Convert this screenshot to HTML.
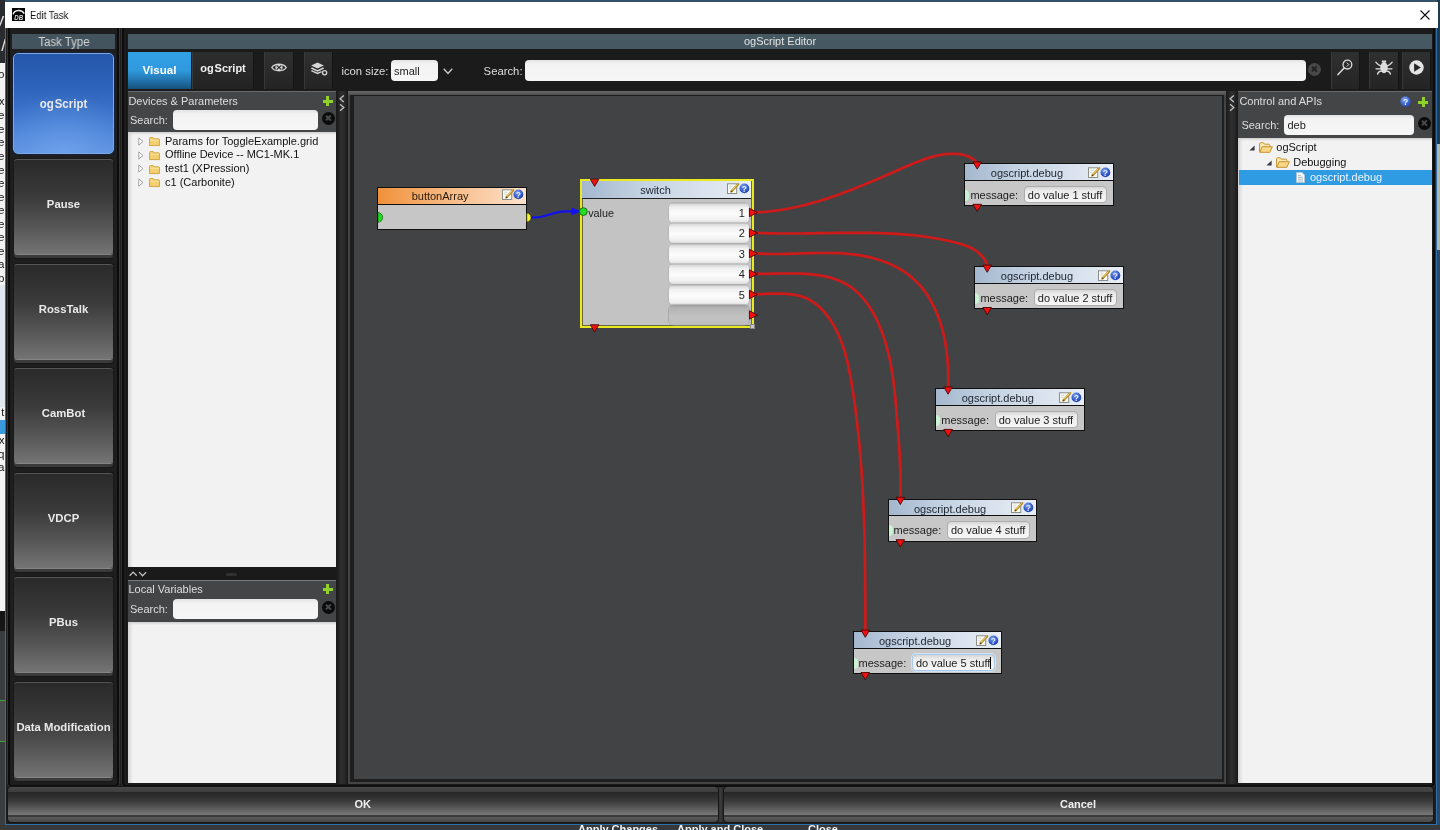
<!DOCTYPE html>
<html><head><meta charset="utf-8"><title>Edit Task</title>
<style>
*{box-sizing:border-box;margin:0;padding:0}
html,body{width:1440px;height:830px;overflow:hidden}
body{position:relative;background:#3a3b3c;font-family:"Liberation Sans",sans-serif;font-size:11px;color:#e4e4e4}
.a{position:absolute}
/* desktop behind */
#bgtop{left:0;top:0;width:1440px;height:3px;background:#34536b}
#bgleft{left:0;top:0;width:5px;height:830px;overflow:hidden;background:#f3f3f3}
#bgleft i{position:absolute;left:0;width:5px}
#bgleft b{position:absolute;right:.6px;font-weight:normal;font-size:11px;line-height:13px;color:#111;white-space:nowrap}
#bgright{left:1437px;top:0;width:3px;height:830px;background:linear-gradient(#1f3b50 0,#1f3b50 144px,#aeb9ac 144px,#aeb9ac 250px,#2a4a68 250px)}
#bgbot{left:0;top:825px;width:1440px;height:5px;background:#38393b;overflow:hidden}
#bgbot span{position:absolute;top:-2.5px;font-weight:bold;font-size:11px;color:#f2f2f2;white-space:nowrap}
/* window */
#win{left:4.6px;top:2px;width:1432.6px;height:823px;background:#1d1d1d;border:1px solid #2f6ea8;border-top:none}
#title{left:5px;top:2px;width:1432.5px;height:26px;background:#fff;z-index:5}
#title .t{left:25px;top:6.600px;will-change:transform;font-size:11px;color:#111;transform:scaleX(.86);transform-origin:0 0;white-space:nowrap}
/* left task panel */
#lp{left:7px;top:22px;width:113px;height:766px;border:1px solid #343434;border-radius:5px;background:#1e1e1e;box-shadow:inset 0 0 0 2px #0c0c0c}
#lph{left:12px;top:34px;width:103px;height:15px;background:#44545e;color:#d4d4d4;text-align:center;font-size:12px;line-height:15px}
#lph span{display:inline-block;transform:scaleX(.95);position:relative;top:1px;will-change:transform}
.tb{left:14px;width:99px;height:95px;border-radius:3px;background:linear-gradient(#2a2a2a 0%,#2f2f2f 12%,#3b3b3b 40%,#5a5a5a 75%,#747474 100%);border-top:1px solid #555;box-shadow:0 1px 0 #848484,0 4px 0 #3a3a3a,0 5px 0 #171717, 0 0 0 1px #191919;color:#e9e9e9;font-weight:bold;font-size:11.3px;text-align:center}
.tb span{position:absolute;left:0;right:0;text-align:center}
#tb0{top:53px;left:13px;width:101px;height:101px;border-radius:5px;background:radial-gradient(ellipse 75% 60% at 50% 100%,rgba(125,175,245,.55),rgba(125,175,245,0) 100%),linear-gradient(#2557ab 0%,#2c62b9 30%,#3f77cd 65%,#5a8fe0 100%);border:1px solid #7aa7e6;box-shadow:0 0 0 1px #16233a}
/* editor */
#eh{left:128px;top:34px;width:1304px;height:15px;background:#465963;color:#e2e2e2;text-align:center;line-height:15px;font-size:11px}
#tool{left:127px;top:50px;width:1306px;height:40px;background:#1b1b1b}
.tbtn{top:52px;height:37px;background:linear-gradient(#303030,#242424);border-left:1px solid #383838;border-right:1px solid #151515}
#tabv{left:128px;top:52px;width:63px;height:37px;background:linear-gradient(#33a0e6 0%,#2f99de 50%,#2272aa 78%,#17517c 100%);color:#fff;font-weight:bold;font-size:11.6px;text-align:center;line-height:36px}
#tabo{left:192px;top:52px;width:62px;height:37px;background:linear-gradient(#2d2d2d,#232323);border-left:1px solid #3a3a3a;border-right:1px solid #141414;color:#f0f0f0;font-weight:bold;font-size:11.6px;text-align:center;line-height:31px}
.inp{background:linear-gradient(#e2e2e2 0,#f3f3f3 4px,#f6f6f6 100%);border-radius:4px;color:#222}
.lbl{color:#dedede;white-space:nowrap}
/* panels */
.ph{background:#444546;color:#e2e2e2}
.list{background:linear-gradient(90deg,#d4d4d4 0,#f2f2f2 5px);color:#111}
.list::before{content:"";position:absolute;left:0;right:0;top:0;height:3px;background:linear-gradient(#cfcfcf,rgba(242,242,242,0))}
.row{position:absolute;white-space:nowrap;color:#111;font-size:11px;line-height:13px}
.xb{width:13px;height:13px;border-radius:50%;background:#0b0b0b}
.xb::before,.xb::after{content:"";position:absolute;left:3.2px;top:5.4px;width:6.6px;height:2.2px;background:var(--x,#4b4b4b);transform:rotate(45deg)}
.xb::after{transform:rotate(-45deg)}
.plus::before,.plus::after{content:"";position:absolute;background:#8fd02a}
.plus{width:10px;height:10px}
.plus::before{left:3.5px;top:0;width:3px;height:10px}
.plus::after{left:0;top:3.5px;width:10px;height:3px}
/* canvas */
#cvf{left:347.5px;top:91px;width:880.5px;height:693px;background:#1e1e1e}
#cvf2{left:348px;top:91px;width:878px;height:693px;border-top:4px solid #5a5a5a;border-left:2px solid #474747;border-right:2px solid #424242;border-bottom:2px solid #383838;border-image:linear-gradient(#686868 0,#4e4e4e 4px,#444 5px,#444 100%) 4 2 2 2}
#cv{left:354px;top:96px;width:868px;height:683px;background:#424345}
/* nodes */
.node{position:absolute;border:1px solid #101010;background:#c7c7c7;color:#1c1c1c}
.dbg{width:149.6px;height:43.2px}
.nh{height:16.6px;border-bottom:1px solid #101010;text-align:center;line-height:18px;font-size:11px;color:#1d2430;background:linear-gradient(90deg,#a3b7ce 0%,#c4d2e2 35%,#e9eef5 100%);white-space:nowrap}
.dbg .nh{padding-right:24.5px;padding-left:0}
.nb{position:relative}
.pg{position:absolute;left:0;top:9px;width:4px;height:11px;border-radius:0 6px 6px 0;background:#c9f3d2}
.ml{position:absolute;left:5px;top:8.4px;font-size:11px;line-height:13px}
.mi{position:absolute;left:58.4px;top:5.2px;width:83px;height:17.4px;border-radius:4px;background:linear-gradient(#d6d6d6 0,#ececec 4px,#f6f6f6 100%);border:1px solid #adadad;font-size:11px;line-height:16.4px;padding-left:3px;white-space:nowrap;color:#1c1c1c}
.mi.foc{border-color:#a9c9ea;box-shadow:0 0 0 1px #d3e3f3}
.cur{display:inline-block;width:1px;height:12px;background:#000;vertical-align:-2px;margin-left:0}
.ic{position:absolute}
svg{overflow:visible}
#root{position:absolute;left:0;top:0;width:1440px;height:830px;will-change:transform}
</style></head><body><div id="root">
<div class="a" id="bgtop"></div>
<div class="a" id="bgleft"><i style="top:0;height:63px;background:#2a2b2f"></i><i style="top:285px;height:122px;background:#dfe6ee"></i><i style="top:420px;height:14px;background:#3a98dc"></i><i style="top:611px;height:20px;background:#151515"></i><i style="top:631px;height:199px;background:#3b3c3d"></i><i style="top:700px;height:1px;background:#2fae3a"></i><i style="top:701px;height:40px;background:#4a4b4c"></i><i style="top:741px;height:1px;background:#2fae3a"></i><b style="top:11px;color:#e4e4e4;font-size:17px;line-height:17px;right:-4px">y:</b><b style="top:37px;color:#e4e4e4;font-size:17px;line-height:17px;right:-1px">/</b><b style="top:67.6px">o</b><b style="top:95.0px">x</b><b style="top:109.0px">e</b><b style="top:122.5px">e</b><b style="top:136.0px">e</b><b style="top:150.0px">e</b><b style="top:163.5px">e</b><b style="top:177.0px">e</b><b style="top:190.5px">e</b><b style="top:204.0px">e</b><b style="top:217.5px">e</b><b style="top:231.0px">e</b><b style="top:244.5px">e</b><b style="top:258.0px">a</b><b style="top:271.5px">p</b><b style="top:406.0px">t</b><b style="top:434.0px">x</b><b style="top:448.0px">q</b><b style="top:461.0px">a</b></div>
<div class="a" id="bgright"></div>
<div class="a" id="bgbot"><span style="left:578px">Apply Changes</span><span style="left:677px">Apply and Close</span><span style="left:808px">Close</span></div>

<div class="a" id="win"></div>
<div class="a" id="title">
 <svg class="a" style="left:7px;top:6px" width="13" height="13" viewBox="0 0 14 14"><rect width="14" height="14" fill="#050505"/><path d="M1.200 6.800C2.400 1.800 10.600 1 13.200 6" fill="none" stroke="#ececec" stroke-width="1.500"/><text x="7.200" y="12.400" font-family="Liberation Sans" font-weight="bold" font-style="italic" font-size="8.200" fill="#dcdcdc" text-anchor="middle" textLength="9.500" lengthAdjust="spacingAndGlyphs">DB</text></svg>
 <div class="a t">Edit Task</div>
 <svg class="a" style="left:1415px;top:8px" width="10" height="10" viewBox="0 0 10 10"><path d="M.5.5l9 9M9.5.5l-9 9" stroke="#111" stroke-width="1.1"/></svg>
</div>

<!-- left task type panel -->
<div class="a" id="lp"></div>
<div class="a" id="lph"><span>Task Type</span></div>
<div class="a tb" id="tb0"><span style="top:42.500px;transform:scaleX(.94);font-size:12.200px">og&#8202;Script</span></div>
<div class="a tb" style="top:159px"><span style="top:38px">Pause</span></div>
<div class="a tb" style="top:263.5px"><span style="top:38px">RossTalk</span></div>
<div class="a tb" style="top:368px"><span style="top:38px">CamBot</span></div>
<div class="a tb" style="top:472.5px"><span style="top:38px">VDCP</span></div>
<div class="a tb" style="top:577px"><span style="top:38px">PBus</span></div>
<div class="a tb" style="top:681.5px"><span style="top:38px">Data Modification</span></div>

<!-- editor frame -->
<div class="a" style="left:121px;top:22px;width:1315px;height:766px;border:1px solid #303030;border-radius:5px;background:#1b1b1b;box-shadow:inset 0 0 0 2px #0c0c0c"></div>
<div class="a" id="eh">ogScript Editor</div>
<div class="a" id="tool"></div>
<div class="a" id="tabv">Visual</div>
<div class="a" id="tabo"><span style="display:inline-block;transform:scaleX(.95)">og&#8202;Script</span></div>
<div class="a tbtn" style="left:264px;width:29.5px"></div>
<svg class="a" style="left:271px;top:62px" width="16" height="11" viewBox="0 0 16 11"><path d="M.8 5.5C3.4 1.2 12.6 1.2 15.2 5.5 12.6 9.8 3.4 9.8.8 5.5z" fill="none" stroke="#d4d4d4" stroke-width="1.4"/><circle cx="8" cy="5.5" r="3.6" fill="#d4d4d4"/><path d="M5.6 3.4l4.8 4.2M10.4 3.4L5.6 7.6" stroke="#2a2a2a" stroke-width="1.2"/></svg>
<div class="a tbtn" style="left:304px;width:28.6px"></div>
<svg class="a" style="left:311px;top:61.5px" width="17" height="14" viewBox="0 0 17 14"><path d="M6.5.4l6.3 3-6.3 3-6.3-3z" fill="#d6d6d6"/><path d="M.4 6l6.1 2.9L12.6 6" fill="none" stroke="#d6d6d6" stroke-width="1.4"/><path d="M.4 8.6l6.1 2.9 4-1.9" fill="none" stroke="#d6d6d6" stroke-width="1.4"/><circle cx="13.6" cy="10.8" r="2.1" fill="none" stroke="#d6d6d6" stroke-width="1.3"/></svg>
<div class="a lbl" style="left:341.4px;top:65px;font-size:11.3px">icon size:</div>
<div class="a inp" style="left:391px;top:60px;width:47px;height:21px;line-height:22px;padding-left:3px;font-size:11px">small</div>
<svg class="a" style="left:443px;top:67.5px" width="10" height="7" viewBox="0 0 10 7"><path d="M.8.8L5 5.4 9.2.8" fill="none" stroke="#c8c8c8" stroke-width="1.4"/></svg>
<div class="a lbl" style="left:483.6px;top:65px;font-size:11.3px">Search:</div>
<div class="a inp" style="left:525px;top:60px;width:781px;height:21px"></div>
<div class="a xb" style="left:1308px;top:63px;background:#484848;--x:#232323"></div>
<div class="a tbtn" style="left:1330.5px;width:29px"></div>
<svg class="a" style="left:1337px;top:59px" width="16" height="17" viewBox="0 0 16 17"><circle cx="10.4" cy="5.6" r="4.4" fill="none" stroke="#dcdcdc" stroke-width="1.3"/><path d="M7.4 8.8L1 15.6" stroke="#dcdcdc" stroke-width="1.5" stroke-linecap="round"/><path d="M9.8 3.6l2 2-2 2" fill="none" stroke="#dcdcdc" stroke-width="1"/></svg>
<div class="a tbtn" style="left:1369px;width:29.5px"></div>
<svg class="a" style="left:1374px;top:58px" width="20" height="18" viewBox="0 0 20 18"><ellipse cx="10" cy="9.6" rx="3.7" ry="5.6" fill="#dedede"/><path d="M8 4.6c-.6-1.6 0-2.4.9-2.4.6 0 .9.5 1.1 1 .2-.5.5-1 1.1-1 .9 0 1.500.8.900 2.4z" fill="#dedede"/><path d="M7 8.200C4.800 7.400 3.200 6 1.800 4.200M13 8.200c2.200-.8 3.800-2.200 5.200-4M6.600 10.800H2M13.400 10.800H18M7.200 13.200c-1.800.2-3.200.8-3.600 2.800M12.800 13.200c1.800.2 3.200.8 3.600 2.800" stroke="#dedede" stroke-width="1.300" fill="none" stroke-linecap="round"/></svg>
<div class="a tbtn" style="left:1402px;width:29px"></div>
<svg class="a" style="left:1408.8px;top:60px" width="15" height="15" viewBox="0 0 17 17"><circle cx="8.5" cy="8.5" r="8.2" fill="#e4e4e4"/><path d="M5.800 3.800v9.400l7.600-4.700z" fill="#262626"/></svg>

<!-- devices panel -->
<div class="a ph" style="left:127.5px;top:91px;width:208px;height:41px;border-top:1px solid #6a6a6a"></div>
<div class="a lbl" style="left:128.4px;top:95px">Devices &amp; Parameters</div>
<div class="a plus" style="left:322.6px;top:96px"></div>
<div class="a lbl" style="left:130px;top:114px">Search:</div>
<div class="a inp" style="left:173px;top:110px;width:145px;height:20px"></div>
<div class="a xb" style="left:321.5px;top:111.5px"></div>
<div class="a list" style="left:127.5px;top:132px;width:208px;height:435px">
 <svg style="position:absolute;left:10.5px;top:4.9px" width="6" height="9" viewBox="0 0 6 9"><path d="M.8.9l4.2 3.6L.8 8.1z" fill="#fff" stroke="#9a9a9a" stroke-width=".9"/></svg>
<svg style="position:absolute;left:21.2px;top:5.2px" width="11" height="9" viewBox="0 0 12 10"><path d="M.5 9.5V1.6c0-.6.4-1 1-1h3l1.2 1.4h4.8c.6 0 1 .4 1 1v6.5z" fill="#f5cf6e" stroke="#c79a2e" stroke-width=".9"/><path d="M1.2 3.6h9.6" stroke="#fbe6a8" stroke-width="1"/></svg>
<div class="row" style="left:37.5px;top:2.6px">Params for ToggleExample.grid</div>
<svg style="position:absolute;left:10.5px;top:18.6px" width="6" height="9" viewBox="0 0 6 9"><path d="M.8.9l4.2 3.6L.8 8.1z" fill="#fff" stroke="#9a9a9a" stroke-width=".9"/></svg>
<svg style="position:absolute;left:21.2px;top:18.9px" width="11" height="9" viewBox="0 0 12 10"><path d="M.5 9.5V1.6c0-.6.4-1 1-1h3l1.2 1.4h4.8c.6 0 1 .4 1 1v6.5z" fill="#f5cf6e" stroke="#c79a2e" stroke-width=".9"/><path d="M1.2 3.6h9.6" stroke="#fbe6a8" stroke-width="1"/></svg>
<div class="row" style="left:37.5px;top:16.3px">Offline Device -- MC1-MK.1</div>
<svg style="position:absolute;left:10.5px;top:32.2px" width="6" height="9" viewBox="0 0 6 9"><path d="M.8.9l4.2 3.6L.8 8.1z" fill="#fff" stroke="#9a9a9a" stroke-width=".9"/></svg>
<svg style="position:absolute;left:21.2px;top:32.5px" width="11" height="9" viewBox="0 0 12 10"><path d="M.5 9.5V1.6c0-.6.4-1 1-1h3l1.2 1.4h4.8c.6 0 1 .4 1 1v6.5z" fill="#f5cf6e" stroke="#c79a2e" stroke-width=".9"/><path d="M1.2 3.6h9.6" stroke="#fbe6a8" stroke-width="1"/></svg>
<div class="row" style="left:37.5px;top:29.9px">test1 (XPression)</div>
<svg style="position:absolute;left:10.5px;top:45.9px" width="6" height="9" viewBox="0 0 6 9"><path d="M.8.9l4.2 3.6L.8 8.1z" fill="#fff" stroke="#9a9a9a" stroke-width=".9"/></svg>
<svg style="position:absolute;left:21.2px;top:46.2px" width="11" height="9" viewBox="0 0 12 10"><path d="M.5 9.5V1.6c0-.6.4-1 1-1h3l1.2 1.4h4.8c.6 0 1 .4 1 1v6.5z" fill="#f5cf6e" stroke="#c79a2e" stroke-width=".9"/><path d="M1.2 3.6h9.6" stroke="#fbe6a8" stroke-width="1"/></svg>
<div class="row" style="left:37.5px;top:43.6px">c1 (Carbonite)</div>
</div>
<!-- splitter h -->
<div class="a" style="left:127.5px;top:567px;width:208px;height:14px;background:#1a1a1a"></div>
<svg class="a" style="left:129.4px;top:571px" width="18.5" height="6" viewBox="0 0 22 7"><path d="M.8 5.6L5 1.2l4.2 4.4M12 1.2l4.2 4.4 4.2-4.4" fill="none" stroke="#c4c4c4" stroke-width="1.5"/></svg>
<div class="a" style="left:226px;top:572.5px;width:11px;height:3px;background:#303030;border-radius:2px"></div>
<!-- local vars -->
<div class="a ph" style="left:127.5px;top:580px;width:208px;height:42px;border-top:1px solid #7a7a7a"></div>
<div class="a lbl" style="left:128.4px;top:583.4px">Local Variables</div>
<div class="a plus" style="left:322.6px;top:584px"></div>
<div class="a lbl" style="left:130px;top:603px">Search:</div>
<div class="a inp" style="left:173px;top:599px;width:145px;height:20px"></div>
<div class="a xb" style="left:321.5px;top:601px"></div>
<div class="a list" style="left:127.5px;top:622px;width:208px;height:161px"></div>

<!-- splitter v left -->
<div class="a" style="left:337.5px;top:91px;width:9px;height:693px;background:linear-gradient(90deg,#222,#2e2e2e 40%,#2a2a2a 70%,#1c1c1c)"></div>
<svg class="a" style="left:339.4px;top:93.6px" width="6" height="18.6" viewBox="0 0 7 20"><path d="M5.6.8L1.2 4.6l4.4 3.8M1.2 11.2l4.4 3.8-4.4 3.8" fill="none" stroke="#c2c2c2" stroke-width="1.5"/></svg>

<!-- canvas -->
<div class="a" id="cvf"></div><div class="a" id="cvf2"></div><div class="a" id="cv"></div>

<!-- splitter v right -->
<div class="a" style="left:1228px;top:91px;width:8.5px;height:693px;background:linear-gradient(90deg,#222,#2e2e2e 40%,#2a2a2a 70%,#1c1c1c)"></div>
<svg class="a" style="left:1229.2px;top:93.6px" width="6" height="18.6" viewBox="0 0 7 20"><path d="M5.6.8L1.2 4.6l4.4 3.8M1.2 11.2l4.4 3.8-4.4 3.8" fill="none" stroke="#c2c2c2" stroke-width="1.5"/></svg>

<!-- right panel -->
<div class="a ph" style="left:1238px;top:91px;width:193.5px;height:46.5px;border-top:1px solid #6a6a6a"></div>
<div class="a lbl" style="left:1239.4px;top:95px">Control and APIs</div>
<svg class="a" style="left:1399.5px;top:96px" width="11" height="11" viewBox="0 0 11 11"><defs><radialGradient id="hgp" cx=".4" cy=".3" r=".8"><stop offset="0" stop-color="#86aaf2"/><stop offset=".6" stop-color="#3a62d0"/><stop offset="1" stop-color="#2444a8"/></radialGradient></defs><circle cx="5.5" cy="5.5" r="5.2" fill="url(#hgp)"/><text x="5.5" y="8.8" font-family="Liberation Sans" font-weight="bold" font-size="8.6" fill="#e6efff" text-anchor="middle">?</text></svg>
<div class="a plus" style="left:1418.4px;top:97.4px"></div>
<div class="a lbl" style="left:1241.4px;top:119px">Search:</div>
<div class="a inp" style="left:1284px;top:115px;width:129.5px;height:20px;line-height:20px;padding-left:3.5px;font-size:11px">deb</div>
<div class="a xb" style="left:1417.5px;top:117px"></div>
<div class="a list" style="left:1238px;top:137.5px;width:193.5px;height:645.5px">
 <svg style="position:absolute;left:11px;top:7.9px" width="6" height="6" viewBox="0 0 6 6"><path d="M5.6.4v5.2H.4z" fill="#3a3a3a"/></svg>
<svg style="position:absolute;left:21.40000000000009px;top:4.5px" width="14" height="11" viewBox="0 0 14 11"><path d="M.6 10V1.8c0-.6.4-1 1-1h2.8l1.2 1.4h4.2c.6 0 1 .4 1 1V4" fill="#fbe9b8" stroke="#c8922a" stroke-width="1"/><path d="M.8 10.3l2.4-5.6h10.2l-2.6 5.6z" fill="#f8d888" stroke="#c8922a" stroke-width="1"/></svg>
<div class="row" style="left:38.299999999999955px;top:3.5px">ogScript</div>
<svg style="position:absolute;left:28px;top:22.9px" width="6" height="6" viewBox="0 0 6 6"><path d="M5.6.4v5.2H.4z" fill="#3a3a3a"/></svg>
<svg style="position:absolute;left:38.40000000000009px;top:19.5px" width="14" height="11" viewBox="0 0 14 11"><path d="M.6 10V1.8c0-.6.4-1 1-1h2.8l1.2 1.4h4.2c.6 0 1 .4 1 1V4" fill="#fbe9b8" stroke="#c8922a" stroke-width="1"/><path d="M.8 10.3l2.4-5.6h10.2l-2.6 5.6z" fill="#f8d888" stroke="#c8922a" stroke-width="1"/></svg>
<div class="row" style="left:55.200000000000045px;top:18.5px">Debugging</div>
<div style="position:absolute;left:1px;right:0;top:32.7px;height:15.2px;background:#2f9be2"></div>
<svg style="position:absolute;left:57.59999999999991px;top:34.7px" width="9" height="11" viewBox="0 0 9 11"><path d="M.5.5h5.6l2.4 2.4v7.6h-8z" fill="#f4f7fb" stroke="#b8c4d2" stroke-width=".8"/><path d="M2 3.6h3M2 5.4h5M2 7.2h5M2 9h5" stroke="#9aa9bb" stroke-width=".7"/></svg>
<div class="row" style="left:72px;top:33.7px;color:#eaf4ff">ogscript.debug</div>
</div>

<!-- nodes -->
<div class="node" style="left:377.4px;top:187px;width:149.4px;height:43.2px;background:#c6c6c6"><div class="nh" style="background:linear-gradient(90deg,#f0913a 0%,#f6b47a 40%,#fde3cd 100%);padding-right:24px;color:#2a1a0c;line-height:17px;height:17px">buttonArray</div></div>
<div class="a" style="left:580px;top:179px;width:174px;height:149px;border:2px solid #e9e922;border-right-width:2.6px;background:#c3c3c3;box-shadow:inset 0 0 0 1px #6a6a40"></div>
<div class="a nh" style="left:582px;top:181px;width:169px;height:17.6px;line-height:19.4px;padding-right:22px;border-bottom:1px solid #222">switch</div>
<div class="a" style="left:588.2px;top:207.4px;color:#1c1c1c;font-size:10.8px">value</div>
<div class="sr" style="top:202.5px">1</div>
<div class="sr" style="top:223px">2</div>
<div class="sr" style="top:243.5px">3</div>
<div class="sr" style="top:264px">4</div>
<div class="sr" style="top:284.5px">5</div>
<div class="sr g" style="top:305px"></div>
<div class="a" style="left:749.6px;top:323.6px;width:5px;height:5px;background:#c9c9c9;border:1px solid #8a8a8a"></div>

<div class="node dbg" style="left:964.4px;top:163.1px"><div class="nh">ogscript.debug</div><div class="nb"><i class="pg"></i><span class="ml">message:</span><span class="mi">do value 1 stuff</span></div></div>
<svg class="ic" style="left:1088.0px;top:166.7px" width="12" height="11" viewBox="0 0 12 11"><rect x="0.5" y="0.8" width="9.2" height="9.7" fill="#fbfbf6" stroke="#8a8f8a" stroke-width="1"/><path d="M2.2 3.2h3.4M2.2 5.2h2.4" stroke="#c9c9c9" stroke-width=".8"/><path d="M11.2 1.2 L4.4 8.4" stroke="#b8902c" stroke-width="2.3" stroke-linecap="round"/><path d="M10.4 1.6 L4.9 7.4" stroke="#efd77a" stroke-width=".9"/><path d="M3.4 9.6l1.1-2.2 1.2 1.1z" fill="#5a3a16"/></svg>
<svg class="ic" style="left:1100.2px;top:166.8px" width="11" height="11" viewBox="0 0 11 11"><defs><radialGradient id="hg1" cx=".4" cy=".3" r=".8"><stop offset="0" stop-color="#7da2ee"/><stop offset=".6" stop-color="#3158c8"/><stop offset="1" stop-color="#1d3a9e"/></radialGradient></defs><circle cx="5.4" cy="5.4" r="4.9" fill="url(#hg1)"/><text x="5.4" y="8.6" font-family="Liberation Sans" font-weight="bold" font-size="8.5" fill="#dfeaff" text-anchor="middle">?</text></svg>
<div class="node dbg" style="left:974.4px;top:266.3px"><div class="nh">ogscript.debug</div><div class="nb"><i class="pg"></i><span class="ml">message:</span><span class="mi">do value 2 stuff</span></div></div>
<svg class="ic" style="left:1098.0px;top:269.9px" width="12" height="11" viewBox="0 0 12 11"><rect x="0.5" y="0.8" width="9.2" height="9.7" fill="#fbfbf6" stroke="#8a8f8a" stroke-width="1"/><path d="M2.2 3.2h3.4M2.2 5.2h2.4" stroke="#c9c9c9" stroke-width=".8"/><path d="M11.2 1.2 L4.4 8.4" stroke="#b8902c" stroke-width="2.3" stroke-linecap="round"/><path d="M10.4 1.6 L4.9 7.4" stroke="#efd77a" stroke-width=".9"/><path d="M3.4 9.6l1.1-2.2 1.2 1.1z" fill="#5a3a16"/></svg>
<svg class="ic" style="left:1110.2px;top:270.0px" width="11" height="11" viewBox="0 0 11 11"><defs><radialGradient id="hg2" cx=".4" cy=".3" r=".8"><stop offset="0" stop-color="#7da2ee"/><stop offset=".6" stop-color="#3158c8"/><stop offset="1" stop-color="#1d3a9e"/></radialGradient></defs><circle cx="5.4" cy="5.4" r="4.9" fill="url(#hg2)"/><text x="5.4" y="8.6" font-family="Liberation Sans" font-weight="bold" font-size="8.5" fill="#dfeaff" text-anchor="middle">?</text></svg>
<div class="node dbg" style="left:935.3px;top:388.2px"><div class="nh">ogscript.debug</div><div class="nb"><i class="pg"></i><span class="ml">message:</span><span class="mi">do value 3 stuff</span></div></div>
<svg class="ic" style="left:1058.9px;top:391.8px" width="12" height="11" viewBox="0 0 12 11"><rect x="0.5" y="0.8" width="9.2" height="9.7" fill="#fbfbf6" stroke="#8a8f8a" stroke-width="1"/><path d="M2.2 3.2h3.4M2.2 5.2h2.4" stroke="#c9c9c9" stroke-width=".8"/><path d="M11.2 1.2 L4.4 8.4" stroke="#b8902c" stroke-width="2.3" stroke-linecap="round"/><path d="M10.4 1.6 L4.9 7.4" stroke="#efd77a" stroke-width=".9"/><path d="M3.4 9.6l1.1-2.2 1.2 1.1z" fill="#5a3a16"/></svg>
<svg class="ic" style="left:1071.1px;top:391.9px" width="11" height="11" viewBox="0 0 11 11"><defs><radialGradient id="hg3" cx=".4" cy=".3" r=".8"><stop offset="0" stop-color="#7da2ee"/><stop offset=".6" stop-color="#3158c8"/><stop offset="1" stop-color="#1d3a9e"/></radialGradient></defs><circle cx="5.4" cy="5.4" r="4.9" fill="url(#hg3)"/><text x="5.4" y="8.6" font-family="Liberation Sans" font-weight="bold" font-size="8.5" fill="#dfeaff" text-anchor="middle">?</text></svg>
<div class="node dbg" style="left:887.5px;top:498.5px"><div class="nh">ogscript.debug</div><div class="nb"><i class="pg"></i><span class="ml">message:</span><span class="mi">do value 4 stuff</span></div></div>
<svg class="ic" style="left:1011.1px;top:502.1px" width="12" height="11" viewBox="0 0 12 11"><rect x="0.5" y="0.8" width="9.2" height="9.7" fill="#fbfbf6" stroke="#8a8f8a" stroke-width="1"/><path d="M2.2 3.2h3.4M2.2 5.2h2.4" stroke="#c9c9c9" stroke-width=".8"/><path d="M11.2 1.2 L4.4 8.4" stroke="#b8902c" stroke-width="2.3" stroke-linecap="round"/><path d="M10.4 1.6 L4.9 7.4" stroke="#efd77a" stroke-width=".9"/><path d="M3.4 9.6l1.1-2.2 1.2 1.1z" fill="#5a3a16"/></svg>
<svg class="ic" style="left:1023.3px;top:502.2px" width="11" height="11" viewBox="0 0 11 11"><defs><radialGradient id="hg4" cx=".4" cy=".3" r=".8"><stop offset="0" stop-color="#7da2ee"/><stop offset=".6" stop-color="#3158c8"/><stop offset="1" stop-color="#1d3a9e"/></radialGradient></defs><circle cx="5.4" cy="5.4" r="4.9" fill="url(#hg4)"/><text x="5.4" y="8.6" font-family="Liberation Sans" font-weight="bold" font-size="8.5" fill="#dfeaff" text-anchor="middle">?</text></svg>
<div class="node dbg" style="left:852.5px;top:631.3px"><div class="nh">ogscript.debug</div><div class="nb"><i class="pg"></i><span class="ml">message:</span><span class="mi foc">do value 5 stuff<i class="cur"></i></span></div></div>
<svg class="ic" style="left:976.1px;top:634.9px" width="12" height="11" viewBox="0 0 12 11"><rect x="0.5" y="0.8" width="9.2" height="9.7" fill="#fbfbf6" stroke="#8a8f8a" stroke-width="1"/><path d="M2.2 3.2h3.4M2.2 5.2h2.4" stroke="#c9c9c9" stroke-width=".8"/><path d="M11.2 1.2 L4.4 8.4" stroke="#b8902c" stroke-width="2.3" stroke-linecap="round"/><path d="M10.4 1.6 L4.9 7.4" stroke="#efd77a" stroke-width=".9"/><path d="M3.4 9.6l1.1-2.2 1.2 1.1z" fill="#5a3a16"/></svg>
<svg class="ic" style="left:988.3px;top:635.0px" width="11" height="11" viewBox="0 0 11 11"><defs><radialGradient id="hg5" cx=".4" cy=".3" r=".8"><stop offset="0" stop-color="#7da2ee"/><stop offset=".6" stop-color="#3158c8"/><stop offset="1" stop-color="#1d3a9e"/></radialGradient></defs><circle cx="5.4" cy="5.4" r="4.9" fill="url(#hg5)"/><text x="5.4" y="8.6" font-family="Liberation Sans" font-weight="bold" font-size="8.5" fill="#dfeaff" text-anchor="middle">?</text></svg>
<svg class="ic" style="left:501.6px;top:189.2px" width="12" height="11" viewBox="0 0 12 11"><rect x="0.5" y="0.8" width="9.2" height="9.7" fill="#fbfbf6" stroke="#8a8f8a" stroke-width="1"/><path d="M2.2 3.2h3.4M2.2 5.2h2.4" stroke="#c9c9c9" stroke-width=".8"/><path d="M11.2 1.2 L4.4 8.4" stroke="#b8902c" stroke-width="2.3" stroke-linecap="round"/><path d="M10.4 1.6 L4.9 7.4" stroke="#efd77a" stroke-width=".9"/><path d="M3.4 9.6l1.1-2.2 1.2 1.1z" fill="#5a3a16"/></svg>
<svg class="ic" style="left:513.4px;top:189px" width="11" height="11" viewBox="0 0 11 11"><defs><radialGradient id="hg6" cx=".4" cy=".3" r=".8"><stop offset="0" stop-color="#7da2ee"/><stop offset=".6" stop-color="#3158c8"/><stop offset="1" stop-color="#1d3a9e"/></radialGradient></defs><circle cx="5.4" cy="5.4" r="4.9" fill="url(#hg6)"/><text x="5.4" y="8.6" font-family="Liberation Sans" font-weight="bold" font-size="8.5" fill="#dfeaff" text-anchor="middle">?</text></svg>
<svg class="ic" style="left:727.2px;top:183.4px" width="12" height="11" viewBox="0 0 12 11"><rect x="0.5" y="0.8" width="9.2" height="9.7" fill="#fbfbf6" stroke="#8a8f8a" stroke-width="1"/><path d="M2.2 3.2h3.4M2.2 5.2h2.4" stroke="#c9c9c9" stroke-width=".8"/><path d="M11.2 1.2 L4.4 8.4" stroke="#b8902c" stroke-width="2.3" stroke-linecap="round"/><path d="M10.4 1.6 L4.9 7.4" stroke="#efd77a" stroke-width=".9"/><path d="M3.4 9.6l1.1-2.2 1.2 1.1z" fill="#5a3a16"/></svg>
<svg class="ic" style="left:738.6px;top:183.2px" width="11" height="11" viewBox="0 0 11 11"><defs><radialGradient id="hg7" cx=".4" cy=".3" r=".8"><stop offset="0" stop-color="#7da2ee"/><stop offset=".6" stop-color="#3158c8"/><stop offset="1" stop-color="#1d3a9e"/></radialGradient></defs><circle cx="5.4" cy="5.4" r="4.9" fill="url(#hg7)"/><text x="5.4" y="8.6" font-family="Liberation Sans" font-weight="bold" font-size="8.5" fill="#dfeaff" text-anchor="middle">?</text></svg>
<svg class="a" style="left:0;top:0;pointer-events:none" width="1440" height="830" viewBox="0 0 1440 830">
<path d="M756.7,212.4 L759.7,212.2 L762.7,212.0 L765.6,211.8 L768.6,211.5 L771.5,211.2 L774.5,210.8 L777.4,210.4 L780.3,210.0 L783.2,209.5 L786.1,209.0 L789.0,208.5 L791.9,207.9 L794.8,207.3 L797.6,206.7 L800.5,206.0 L803.3,205.4 L806.2,204.6 L809.0,203.9 L811.8,203.1 L814.6,202.3 L817.5,201.5 L820.3,200.7 L823.1,199.8 L825.9,198.9 L828.7,198.0 L831.4,197.1 L834.2,196.1 L837.0,195.2 L839.8,194.2 L842.5,193.1 L845.3,192.1 L848.1,191.1 L850.8,190.0 L853.6,188.9 L856.3,187.8 L859.1,186.7 L861.9,185.6 L864.6,184.5 L867.4,183.3 L870.1,182.2 L872.9,181.0 L875.6,179.9 L878.4,178.7 L881.1,177.5 L883.9,176.3 L886.6,175.1 L889.4,173.9 L892.2,172.7 L894.9,171.5 L897.7,170.2 L900.4,169.0 L903.2,167.8 L906.0,166.6 L908.8,165.4 L911.5,164.2 L914.3,163.1 L917.1,162.0 L919.9,160.9 L922.7,159.8 L925.5,158.9 L928.3,158.0 L931.1,157.1 L933.9,156.4 L936.8,155.7 L939.6,155.1 L942.4,154.6 L945.2,154.2 L948.1,154.0 L950.9,153.8 L953.8,153.8 L956.7,153.9 L959.5,154.2 L962.4,154.6 L965.1,155.3 L967.8,156.2 L970.4,157.4 L972.9,159.0 L975.1,160.9 L977.2,163.3" fill="none" stroke="#cf1a1a" stroke-width="2.7" stroke-linecap="round"/>
<path d="M756.8,232.9 L759.8,233.0 L762.8,233.1 L765.9,233.2 L768.9,233.3 L771.9,233.4 L774.9,233.4 L778.0,233.5 L781.0,233.5 L784.0,233.5 L787.1,233.5 L790.1,233.5 L793.2,233.5 L796.2,233.5 L799.3,233.5 L802.3,233.5 L805.4,233.4 L808.4,233.4 L811.5,233.3 L814.5,233.3 L817.6,233.2 L820.7,233.2 L823.7,233.1 L826.8,233.1 L829.8,233.0 L832.9,233.0 L835.9,232.9 L839.0,232.9 L842.1,232.9 L845.1,232.8 L848.2,232.8 L851.3,232.8 L854.3,232.8 L857.4,232.8 L860.4,232.8 L863.5,232.8 L866.5,232.8 L869.6,232.9 L872.7,232.9 L875.7,233.0 L878.8,233.1 L881.8,233.2 L884.9,233.3 L887.9,233.4 L891.0,233.6 L894.0,233.7 L897.0,233.9 L900.1,234.1 L903.1,234.3 L906.1,234.6 L909.2,234.9 L912.2,235.2 L915.2,235.5 L918.2,235.8 L921.3,236.2 L924.3,236.6 L927.3,237.0 L930.3,237.5 L933.3,238.0 L936.3,238.5 L939.3,239.0 L942.3,239.6 L945.3,240.2 L948.3,240.9 L951.2,241.5 L954.2,242.3 L957.2,243.0 L960.1,243.8 L963.0,244.7 L965.9,245.7 L968.6,246.8 L971.3,248.0 L973.9,249.4 L976.3,251.0 L978.6,252.7 L980.7,254.7 L982.6,256.9 L984.4,259.3 L985.9,262.1 L987.2,265.1" fill="none" stroke="#cf1a1a" stroke-width="2.7" stroke-linecap="round"/>
<path d="M756.8,253.4 L760.2,253.6 L763.7,253.8 L767.2,253.9 L770.7,254.0 L774.2,254.0 L777.7,254.0 L781.3,254.0 L784.8,253.9 L788.4,253.8 L792.0,253.7 L795.6,253.6 L799.1,253.5 L802.7,253.4 L806.3,253.3 L809.9,253.2 L813.5,253.1 L817.1,253.0 L820.7,253.0 L824.3,253.0 L827.9,253.0 L831.5,253.0 L835.1,253.1 L838.7,253.2 L842.2,253.4 L845.8,253.7 L849.3,254.0 L852.8,254.4 L856.3,254.8 L859.8,255.3 L863.3,255.9 L866.8,256.6 L870.2,257.4 L873.6,258.2 L877.0,259.2 L880.4,260.3 L883.7,261.4 L887.0,262.7 L890.2,264.1 L893.4,265.6 L896.6,267.2 L899.6,268.9 L902.6,270.7 L905.6,272.7 L908.4,274.7 L911.1,276.9 L913.8,279.2 L916.3,281.6 L918.8,284.1 L921.1,286.7 L923.3,289.4 L925.4,292.3 L927.4,295.2 L929.3,298.2 L931.1,301.3 L932.7,304.4 L934.3,307.6 L935.8,310.8 L937.2,314.1 L938.5,317.4 L939.7,320.8 L940.8,324.2 L941.8,327.6 L942.7,331.1 L943.6,334.5 L944.4,338.0 L945.1,341.6 L945.7,345.1 L946.2,348.6 L946.7,352.2 L947.1,355.8 L947.5,359.3 L947.7,362.9 L948.0,366.4 L948.1,370.0 L948.2,373.5 L948.3,377.0 L948.3,380.5 L948.2,384.0 L948.1,387.4" fill="none" stroke="#cf1a1a" stroke-width="2.7" stroke-linecap="round"/>
<path d="M756.8,273.9 L760.5,273.9 L764.3,273.9 L768.2,273.8 L772.1,273.7 L776.2,273.6 L780.3,273.5 L784.4,273.5 L788.6,273.5 L792.8,273.5 L797.0,273.5 L801.3,273.7 L805.5,273.9 L809.7,274.2 L813.8,274.6 L817.9,275.2 L822.0,275.8 L826.0,276.6 L829.9,277.6 L833.7,278.7 L837.4,280.0 L841.0,281.5 L844.5,283.2 L847.9,285.1 L851.1,287.2 L854.1,289.5 L857.0,292.1 L859.8,294.8 L862.4,297.6 L865.0,300.7 L867.3,303.8 L869.6,307.1 L871.7,310.5 L873.8,314.0 L875.7,317.7 L877.5,321.3 L879.1,325.1 L880.7,328.9 L882.2,332.8 L883.6,336.7 L884.8,340.6 L886.0,344.5 L887.1,348.4 L888.1,352.4 L889.1,356.3 L889.9,360.3 L890.7,364.3 L891.4,368.2 L892.1,372.2 L892.7,376.2 L893.2,380.3 L893.8,384.3 L894.2,388.3 L894.7,392.3 L895.1,396.3 L895.5,400.3 L895.8,404.4 L896.2,408.4 L896.5,412.4 L896.8,416.4 L897.2,420.4 L897.5,424.4 L897.8,428.4 L898.1,432.4 L898.4,436.4 L898.7,440.4 L899.0,444.4 L899.2,448.4 L899.5,452.4 L899.7,456.4 L899.9,460.4 L900.0,464.5 L900.2,468.5 L900.3,472.5 L900.4,476.5 L900.4,480.6 L900.5,484.6 L900.4,488.7 L900.4,492.7 L900.3,496.8" fill="none" stroke="#cf1a1a" stroke-width="2.7" stroke-linecap="round"/>
<path d="M756.0,294.4 L760.7,294.1 L765.6,293.9 L770.6,293.7 L775.8,293.5 L781.0,293.6 L786.2,293.8 L791.4,294.3 L796.4,295.2 L801.3,296.4 L806.0,298.1 L810.4,300.3 L814.5,303.0 L818.3,306.0 L821.9,309.4 L825.2,313.1 L828.3,317.1 L831.1,321.2 L833.7,325.4 L836.1,329.8 L838.3,334.3 L840.2,338.9 L842.0,343.5 L843.6,348.3 L845.1,353.1 L846.4,358.0 L847.6,362.9 L848.7,367.9 L849.7,372.9 L850.7,377.9 L851.5,383.0 L852.3,388.0 L853.1,393.1 L853.9,398.1 L854.6,403.1 L855.3,408.2 L855.9,413.2 L856.5,418.2 L857.1,423.3 L857.7,428.3 L858.2,433.3 L858.8,438.3 L859.2,443.3 L859.7,448.4 L860.1,453.4 L860.6,458.4 L860.9,463.4 L861.3,468.4 L861.7,473.4 L862.0,478.4 L862.3,483.4 L862.6,488.4 L862.8,493.4 L863.1,498.4 L863.3,503.4 L863.5,508.4 L863.7,513.4 L863.9,518.4 L864.1,523.4 L864.2,528.5 L864.4,533.5 L864.5,538.5 L864.6,543.5 L864.7,548.5 L864.8,553.5 L864.9,558.6 L864.9,563.6 L865.0,568.6 L865.1,573.6 L865.1,578.7 L865.1,583.7 L865.2,588.8 L865.2,593.8 L865.2,598.9 L865.2,603.9 L865.3,609.0 L865.3,614.1 L865.3,619.1 L865.3,624.2 L865.3,629.3" fill="none" stroke="#cf1a1a" stroke-width="2.7" stroke-linecap="round"/>
<path d="M972.9,161.9 h8.6 l-4.3,7.2z" fill="#f01010" stroke="#4a0505" stroke-width=".9" stroke-linejoin="round"/>
<path d="M972.9,204.3 h8.6 l-4.3,7.2z" fill="#f01010" stroke="#4a0505" stroke-width=".9" stroke-linejoin="round"/>
<path d="M982.9,265.1 h8.6 l-4.3,7.2z" fill="#f01010" stroke="#4a0505" stroke-width=".9" stroke-linejoin="round"/>
<path d="M982.9,307.5 h8.6 l-4.3,7.2z" fill="#f01010" stroke="#4a0505" stroke-width=".9" stroke-linejoin="round"/>
<path d="M943.8,387.0 h8.6 l-4.3,7.2z" fill="#f01010" stroke="#4a0505" stroke-width=".9" stroke-linejoin="round"/>
<path d="M943.8,429.4 h8.6 l-4.3,7.2z" fill="#f01010" stroke="#4a0505" stroke-width=".9" stroke-linejoin="round"/>
<path d="M896.0,497.3 h8.6 l-4.3,7.2z" fill="#f01010" stroke="#4a0505" stroke-width=".9" stroke-linejoin="round"/>
<path d="M896.0,539.7 h8.6 l-4.3,7.2z" fill="#f01010" stroke="#4a0505" stroke-width=".9" stroke-linejoin="round"/>
<path d="M861.0,630.1 h8.6 l-4.3,7.2z" fill="#f01010" stroke="#4a0505" stroke-width=".9" stroke-linejoin="round"/>
<path d="M861.0,672.5 h8.6 l-4.3,7.2z" fill="#f01010" stroke="#4a0505" stroke-width=".9" stroke-linejoin="round"/>
<path d="M749.4,208.3 v8.4 l8.2,-4.2z" fill="#f01010" stroke="#4a0505" stroke-width=".9" stroke-linejoin="round"/>
<path d="M749.4,228.8 v8.4 l8.2,-4.2z" fill="#f01010" stroke="#4a0505" stroke-width=".9" stroke-linejoin="round"/>
<path d="M749.4,249.3 v8.4 l8.2,-4.2z" fill="#f01010" stroke="#4a0505" stroke-width=".9" stroke-linejoin="round"/>
<path d="M749.4,269.8 v8.4 l8.2,-4.2z" fill="#f01010" stroke="#4a0505" stroke-width=".9" stroke-linejoin="round"/>
<path d="M749.4,290.3 v8.4 l8.2,-4.2z" fill="#f01010" stroke="#4a0505" stroke-width=".9" stroke-linejoin="round"/>
<path d="M749.4,310.8 v8.4 l8.2,-4.2z" fill="#f01010" stroke="#4a0505" stroke-width=".9" stroke-linejoin="round"/>
<path d="M590.3,179.2 h8.6 l-4.3,7.2z" fill="#f01010" stroke="#4a0505" stroke-width=".9" stroke-linejoin="round"/>
<path d="M590.3,324.8 h8.6 l-4.3,7.2z" fill="#f01010" stroke="#4a0505" stroke-width=".9" stroke-linejoin="round"/>
<!-- buttonArray ports + blue wire -->
<path d="M378,212.6 a4.6,4.8 0 0 1 0,9.6z" fill="#1fe01f" stroke="#0b5a0b" stroke-width=".7"/>
<path d="M526.8,213.2 a4.2,4.3 0 0 1 0,8.6z" fill="#f2f230" stroke="#55550a" stroke-width=".7"/>
<path d="M531,217.6 C545,217.8 548,214.6 556,212.6 S568,211.4 574,211.4" fill="none" stroke="#1212ee" stroke-width="2.2"/>
<path d="M571.6,207.6 l9.4,3.8 -9.4,3.8z" fill="#1212ee"/>
<circle cx="583.4" cy="211.6" r="3.9" fill="#22dd22" stroke="#0b5a0b" stroke-width=".8"/>
</svg>

<!-- bottom buttons -->
<div class="a" style="left:716px;top:788px;width:9px;height:34px;background:linear-gradient(90deg,#1a1a1a,#3a3a3a 45%,#3a3a3a 55%,#1a1a1a)"></div>
<div class="a bb" style="left:8px;width:709.5px"><span>OK</span></div>
<div class="a bb" style="left:723.5px;width:709px"><span>Cancel</span></div>
<style>
.bb{top:787px;height:35px;border-radius:4px;background:linear-gradient(#484848 0,#3e3e3e 4.5px,#252525 5px,#2b2b2b 8px,#3b3b3b 14px,#5c5c5c 22px,#797979 28px,#3a3a3a 28.5px,#3a3a3a 29.5px,#5b5b5b 30px,#484848 35px);box-shadow:0 0 0 1px #161616;text-align:center;color:#f0f0f0;font-weight:bold;font-size:11px;line-height:34px}
.sr{position:absolute;left:668.6px;width:80.2px;height:20px;border-radius:4.5px;letter-spacing:0;background:linear-gradient(#b4b4b4 0,#dcdcdc 1.5px,#f1f1f1 4.5px,#fcfcfc 55%,#f0f0f0 85%,#dadada 100%);box-shadow:0 0 0 .5px #aaa;color:#222;font-size:11px;text-align:right;padding-right:3.8px;line-height:20.6px}
.sr.g{background:linear-gradient(#9c9c9c 0,#b4b4b4 3px,#c2c2c2 60%,#bdbdbd 100%);box-shadow:0 0 0 .6px #979797}
</style>
</div></body></html>
